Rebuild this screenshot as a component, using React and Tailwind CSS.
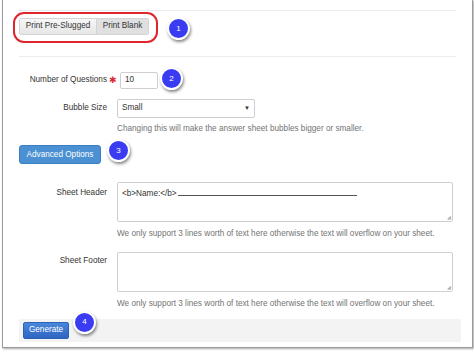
import React from "react";

function Badge({ n, className = "" }) {
  return (
    <div
      className={
        "absolute flex h-[23px] w-[23px] items-center justify-center rounded-full border-2 border-white bg-[#3a3cf2] text-[8px] text-white shadow-[1px_2px_3px_rgba(0,0,0,0.45)] " +
        className
      }
    >
      {n}
    </div>
  );
}

export default function App() {
  const font = { fontFamily: '"Liberation Sans", Arial, sans-serif' };
  return (
    <div className="h-[352px] w-[474px] bg-white" style={font}>
      <div className="ml-[2px] h-[348px] w-[471px] border-b border-l border-r border-[#9a9a9a] bg-white shadow-[1px_1px_2px_rgba(0,0,0,0.35)] text-[8.2px] text-[#333]">
        <div className="px-[16px] pt-[10px]">
          {/* top section */}
          <div className="relative h-[47px] border-b border-t border-[#ececec]">
            <div className="absolute left-[-6px] top-[1px] h-[31px] w-[145px] rounded-[11px] border-2 border-[#e0262d]" />
            <div className="absolute left-[0px] top-[7px] flex h-[17px] overflow-hidden rounded-[2px] border border-[#d4d4d4]">
              <div className="flex w-[76px] items-center justify-center bg-gradient-to-b from-[#f7f7f7] to-[#e6e6e6] text-[#333]">
                Print Pre-Slugged
              </div>
              <div className="flex w-[52px] items-center justify-center border-l border-[#d4d4d4] bg-[#e0e0e0] text-[#333]">
                Print Blank
              </div>
            </div>
            <Badge n="1" className="left-[148px] top-[6px]" />
          </div>

          {/* number of questions */}
          <div className="relative mt-[15px] flex h-[17px] items-center">
            <div className="w-[88px] text-right">Number of Questions</div>
            <span className="ml-[2px] text-[9px] text-[#e0262d]">✱</span>
            <div className="ml-[3px] flex h-[17px] w-[38px] items-center rounded-[2px] border border-[#cfcfcf] pl-[4px]">
              10
            </div>
            <Badge n="2" className="left-[141px] top-[-5px]" />
          </div>

          {/* bubble size */}
          <div className="mt-[10px] flex h-[19px] items-center">
            <div className="w-[88px] text-right">Bubble Size</div>
            <div className="ml-[10px] flex h-[19px] w-[138px] items-center justify-between rounded-[2px] border border-[#cfcfcf] pl-[4px] pr-[4px]">
              <span>Small</span>
              <span className="text-[6px]">▼</span>
            </div>
          </div>
          <div className="ml-[98px] mt-[5px] text-[#737373]">
            Changing this will make the answer sheet bubbles bigger or smaller.
          </div>

          {/* advanced options */}
          <div className="relative mt-[10px] h-[19px]">
            <div className="flex h-[19px] w-[82px] items-center justify-center rounded-[3px] border border-[#3a7fc0] bg-[#4a90d2] text-white">
              Advanced Options
            </div>
            <Badge n="3" className="left-[88px] top-[-6px]" />
          </div>

          {/* sheet header */}
          <div className="mt-[18px] flex">
            <div className="w-[88px] pt-[5px] text-right">Sheet Header</div>
            <div className="ml-[10px]">
              <div className="relative h-[40px] w-[336px] rounded-[2px] border border-[#cfcfcf] px-[4px] pt-[5px]">
                <span>{"<b>Name:</b>"}</span>
                <span className="absolute left-[60px] top-[12px] h-[1px] w-[179px] bg-[#555]" />
                <span className="absolute bottom-[1px] right-[1px] text-[5px] leading-none text-[#aaa]">◢</span>
              </div>
              <div className="mt-[6px] text-[#737373]">
                We only support 3 lines worth of text here otherwise the text will overflow on your sheet.
              </div>
            </div>
          </div>

          {/* sheet footer */}
          <div className="mt-[11px] flex">
            <div className="w-[88px] pt-[3px] text-right">Sheet Footer</div>
            <div className="ml-[10px]">
              <div className="relative h-[40px] w-[336px] rounded-[2px] border border-[#cfcfcf]">
                <span className="absolute bottom-[1px] right-[1px] text-[5px] leading-none text-[#aaa]">◢</span>
              </div>
              <div className="mt-[6px] text-[#737373]">
                We only support 3 lines worth of text here otherwise the text will overflow on your sheet.
              </div>
            </div>
          </div>

          {/* footer */}
          <div className="relative mt-[9px] flex h-[23px] w-[442px] items-center bg-[#f3f3f3] px-[4px]">
            <div className="flex h-[17px] w-[46px] items-center justify-center rounded-[2px] border border-[#2a62b4] bg-gradient-to-b from-[#4a86dc] to-[#2f66c2] text-white">
              Generate
            </div>
            <Badge n="4" className="left-[54px] top-[-8px]" />
          </div>
        </div>
      </div>
    </div>
  );
}
